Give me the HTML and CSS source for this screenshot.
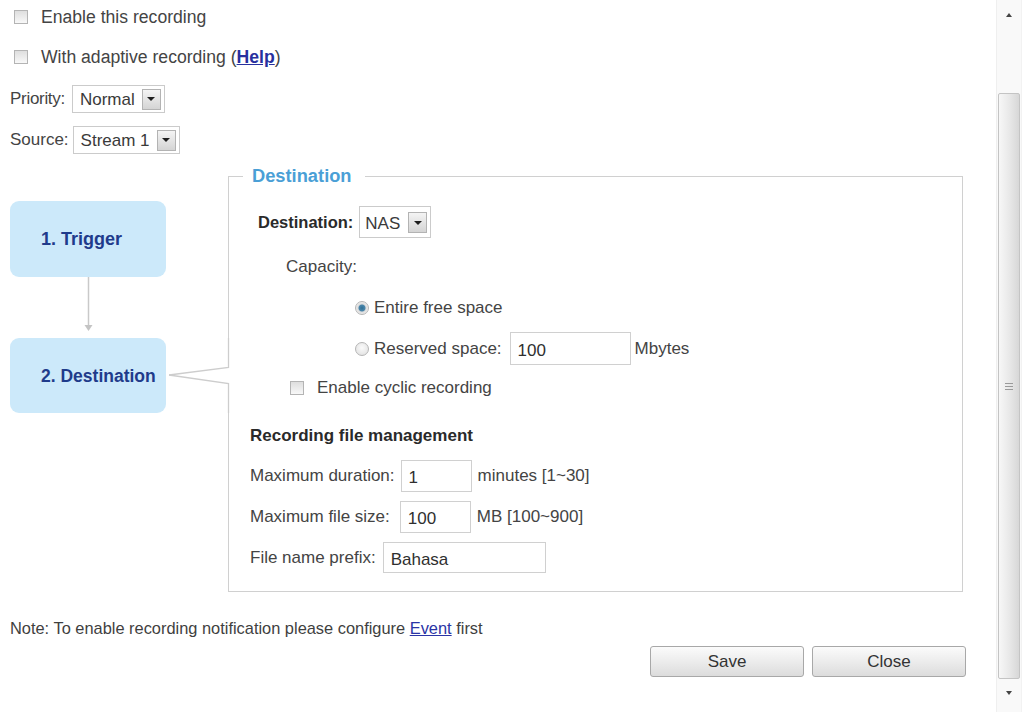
FILE: index.html
```html
<!DOCTYPE html>
<html>
<head>
<meta charset="utf-8">
<title>Recording settings</title>
<link rel="stylesheet" href="styles.css">
</head>
<body>
<div class="page">
  <div class="main">
    <label class="check-row r1"><span class="cb"></span><span>Enable this recording</span></label>
    <label class="check-row r2"><span class="cb"></span><span>With adaptive recording (<a class="link" href="#">Help</a>)</span></label>

    <div class="sel-row prio">
      <span class="lbl tight">Priority:</span>
      <span class="select w-prio"><span>Normal</span><span class="sel-btn"></span></span>
    </div>
    <div class="sel-row src">
      <span class="lbl">Source:</span>
      <span class="select w-src"><span>Stream 1</span><span class="sel-btn"></span></span>
    </div>

    <div class="lower">
      <div class="flow">
        <div class="step step1">1. Trigger</div>
        <svg class="arrow" width="156" height="61" viewBox="0 0 156 61">
          <line x1="78.5" y1="0" x2="78.5" y2="50" stroke="#c9c9c9" stroke-width="1.5"/>
          <path d="M74.5 48 L82.5 48 L78.5 54 Z" fill="#c4c4c4"/>
        </svg>
        <div class="step-row">
          <div class="step">2. Destination</div>
          <svg class="connector" width="64" height="75" viewBox="0 0 64 75">
            <rect x="60" y="29" width="4" height="17" fill="#ffffff"/>
            <path d="M3 37 L62.5 29.5 L62.5 0" fill="none" stroke="#cdcdcd" stroke-width="1.3"/>
            <path d="M3 37 L62.5 45.5 L62.5 75" fill="none" stroke="#cdcdcd" stroke-width="1.3"/>
          </svg>
        </div>
      </div>

      <fieldset class="dest">
        <legend>Destination</legend>
        <div class="f-row f-dest">
          <span class="blbl">Destination:</span>
          <span class="select w-nas"><span>NAS</span><span class="sel-btn"></span></span>
        </div>
        <div class="f-row f-cap">Capacity:</div>
        <div class="f-row f-radio f-entire"><span class="radio on"></span><span>Entire free space</span></div>
        <div class="f-row f-radio f-res">
          <span class="radio"></span><span>Reserved space:</span>
          <input class="txt w-res" type="text" value="100">
          <span>Mbytes</span>
        </div>
        <label class="f-row f-cyc"><span class="cb"></span><span>Enable cyclic recording</span></label>
        <div class="f-row f-rfm">Recording file management</div>
        <div class="f-row f-field f-dur">
          <span>Maximum duration:</span>
          <input class="txt w-small" type="text" value="1">
          <span>minutes [1~30]</span>
        </div>
        <div class="f-row f-field f-size">
          <span>Maximum file size:</span>
          <input class="txt w-small" type="text" value="100">
          <span>MB [100~900]</span>
        </div>
        <div class="f-row f-field f-pre">
          <span>File name prefix:</span>
          <input class="txt w-pre" type="text" value="Bahasa">
        </div>
      </fieldset>
    </div>

    <p class="note">Note: To enable recording notification please configure <a class="link2" href="#">Event</a> first</p>

    <div class="buttons">
      <button class="btn" type="button">Save</button>
      <button class="btn" type="button">Close</button>
    </div>
  </div>

  <div class="scrollbar">
    <div class="sb-up"><span class="tri-up"></span></div>
    <div class="sb-track"></div>
    <div class="sb-thumb"><span class="grip"></span></div>
    <div class="sb-down"><span class="tri-down"></span></div>
  </div>
</div>
</body>
</html>
```

FILE: styles.css
```css
* { box-sizing: border-box; }

body {
  margin: 0;
  font-family: "Liberation Sans", Arial, sans-serif;
  font-size: 17px;
  line-height: 20px;
  color: #444444;
  background: #ffffff;
}

.page {
  display: flex;
  width: 1032px;
  height: 712px;
  overflow: hidden;
}

.main {
  flex: 1;
  padding: 7px 0 0 10px;
}

/* checkbox rows */
.check-row {
  display: flex;
  align-items: center;
  height: 20px;
  gap: 13px;
  padding-left: 4px;
  font-size: 17.6px;
}
.r2 { margin-top: 20px; }

.cb {
  flex: none;
  width: 14px;
  height: 14px;
  border: 1px solid #b4b4b4;
  background: linear-gradient(#dedede, #f8f8f8);
}

.link {
  color: #27309e;
  font-weight: bold;
  text-decoration: underline;
}
.link2 {
  color: #2a34a6;
  text-decoration: underline;
}

/* select rows */
.sel-row {
  display: flex;
  align-items: center;
  gap: 4px;
}
.prio { margin-top: 18px; }
.src { margin-top: 13px; }
.tight { letter-spacing: -0.3px; margin-right: 3px; }

.select {
  display: flex;
  align-items: center;
  justify-content: space-between;
  height: 28px;
  border: 1px solid #cbcbcb;
  padding: 2px 3px 0 7px;
  background: #ffffff;
  color: #3a3a3a;
}
.w-prio { width: 93px; }
.w-src { width: 107px; }
.w-nas { width: 72px; height: 32px; padding-left: 5px; padding-top: 3px; }

.sel-btn {
  display: flex;
  align-items: center;
  justify-content: center;
  width: 19px;
  height: 21px;
  margin-top: -2px;
  border: 1px solid #b3b3b3;
  background: linear-gradient(#f4f4f4, #d4d4d4);
}
.sel-btn::after {
  content: "";
  border-left: 4px solid transparent;
  border-right: 4px solid transparent;
  border-top: 4px solid #1e1e1e;
}

/* lower area */
.lower {
  display: flex;
  margin-top: 12px;
}

.flow {
  position: relative;
  z-index: 1;
  width: 218px;
  flex: none;
}

.step {
  display: flex;
  align-items: center;
  width: 156px;
  height: 75px;
  padding-left: 31px;
  border-radius: 9px;
  background: #cce9fa;
  color: #1f3b8b;
  font-weight: bold;
  font-size: 17.5px;
}
.step1 { margin-top: 35px; height: 76px; font-size: 18px; }

.arrow { display: block; }

.step-row {
  display: flex;
}
.connector {
  display: block;
  margin-right: -2px;
}

/* fieldset */
.dest {
  flex: 0 0 735px;
  margin: 0;
  padding: 0 0 18px 0;
  min-width: 0;
  border: 1px solid #d0d0d0;
}
.dest legend {
  margin-left: 14px;
  padding: 0 13px 0 9px;
  font-size: 18.3px;
  line-height: 20px;
  font-weight: bold;
  color: #4a9fd6;
}

.f-row {
  display: flex;
  align-items: center;
}

.f-dest {
  margin-top: 20px;
  padding-left: 29px;
  gap: 6px;
}
.blbl {
  font-weight: bold;
  font-size: 16.5px;
  color: #2a2a2a;
}

.f-cap {
  margin-top: 19px;
  height: 20px;
  padding-left: 57px;
}

.f-radio {
  padding-left: 126px;
  gap: 5px;
}
.f-entire { margin-top: 21px; height: 20px; }
.f-res { margin-top: 14px; height: 33px; }
.f-res .txt { margin-left: 3px; margin-right: -1px; }

.radio {
  flex: none;
  width: 14px;
  height: 14px;
  border-radius: 50%;
  border: 1px solid #b5b5b5;
  background: radial-gradient(circle at 50% 40%, #fafafa, #dedede);
}
.radio.on {
  background: radial-gradient(circle, #2f6f95 0, #4b86aa 3px, #dcdcdc 4px, #f2f2f2 7px);
}

.f-cyc {
  margin-top: 13px;
  height: 20px;
  padding-left: 61px;
  gap: 13px;
}

.f-rfm {
  margin-top: 28px;
  height: 20px;
  padding-left: 21px;
  font-weight: bold;
  color: #2a2a2a;
}

.f-field {
  padding-left: 21px;
  gap: 6px;
}
.f-dur { margin-top: 14px; }
.f-size { margin-top: 9px; }
.f-size .txt { margin-left: 4px; }
.f-pre { margin-top: 9px; }

.txt {
  height: 32px;
  border: 1px solid #d0d0d0;
  padding: 4px 7px 0 7px;
  font-family: "Liberation Sans", Arial, sans-serif;
  font-size: 17px;
  color: #2f2f2f;
  background: #ffffff;
  outline: none;
}
.w-res { width: 121px; height: 33px; }
.w-small { width: 71px; }
.w-pre { width: 163px; height: 31px; margin-left: 1px; }

/* note and buttons */
.note {
  margin: 26px 0 0 0;
  height: 20px;
  font-size: 16.4px;
  color: #3f3f3f;
}

.buttons {
  display: flex;
  justify-content: flex-end;
  gap: 8px;
  margin-top: 8px;
  padding-right: 30px;
}
.btn {
  width: 154px;
  height: 31px;
  border: 1px solid #a8a8a8;
  border-radius: 3px;
  background: linear-gradient(#fbfbfb, #ececec 50%, #dcdcdc);
  font-family: "Liberation Sans", Arial, sans-serif;
  font-size: 17px;
  color: #333333;
  padding: 0;
}

/* scrollbar */
.scrollbar {
  flex: none;
  display: flex;
  flex-direction: column;
  width: 26px;
  margin-right: 10px;
  background: #f9f9f9;
  border-left: 1px solid #efefef;
  border-right: 1px solid #f2f2f2;
}
.sb-up {
  height: 30px;
  display: flex;
  justify-content: center;
  padding-top: 13px;
}
.tri-up {
  width: 0;
  height: 0;
  border-left: 3px solid transparent;
  border-right: 3px solid transparent;
  border-bottom: 4px solid #444444;
}
.sb-track { height: 63px; }
.sb-thumb {
  height: 586px;
  margin: 0 1px;
  border: 1px solid #c4c4c4;
  border-radius: 2px;
  background: linear-gradient(90deg, #f7f7f7, #e9e9e9 50%, #d7d7d7);
  display: flex;
  align-items: center;
  justify-content: center;
}
.grip {
  width: 8px;
  height: 7px;
  border-top: 1px solid #9a9a9a;
  border-bottom: 1px solid #9a9a9a;
  background: linear-gradient(#9a9a9a, #9a9a9a) center / 100% 1px no-repeat;
}
.sb-down {
  flex: 1;
  display: flex;
  justify-content: center;
  padding-top: 12px;
}
.tri-down {
  width: 0;
  height: 0;
  border-left: 3px solid transparent;
  border-right: 3px solid transparent;
  border-top: 4px solid #444444;
}
```
